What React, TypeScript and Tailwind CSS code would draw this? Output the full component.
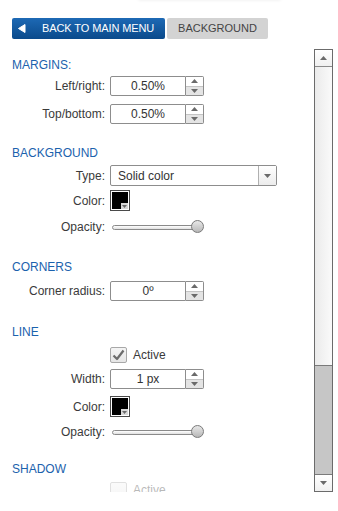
import React from "react";

const font = { fontFamily: '"Liberation Sans", Arial, sans-serif' };

function Heading({ children, mt }: { children: React.ReactNode; mt: string }) {
  return (
    <div className={`${mt} h-[14px] text-[12px] leading-[14px] text-[#1b62ad]`}>{children}</div>
  );
}

function Row({ label, mt, h, children }: { label: string; mt: string; h: string; children: React.ReactNode }) {
  return (
    <div className={`${mt} ${h} flex items-center`}>
      <div className="w-[94px] pr-[1px] text-right text-[12px] leading-[14px] text-[#3a3a3a]">{label}</div>
      <div className="ml-[4px] flex items-center">{children}</div>
    </div>
  );
}

function Spinner({ value }: { value: string }) {
  return (
    <div className="flex h-[20px]">
      <div className="flex h-[20px] w-[76px] items-center justify-center rounded-l-[2px] border border-[#8d8d8d] bg-white text-[12px] text-[#333]">
        {value}
      </div>
      <div className="flex h-[20px] w-[18px] flex-col rounded-r-[2px] border border-l-0 border-[#8d8d8d]">
        <div className="flex flex-1 items-center justify-center border-b border-[#c4c4c4] bg-white">
          <svg width="7" height="4" viewBox="0 0 7 4"><path d="M0 4 L3.5 0 L7 4 Z" fill="#6a6a6a" /></svg>
        </div>
        <div className="flex flex-1 items-center justify-center bg-[#e4e4e4]">
          <svg width="7" height="4" viewBox="0 0 7 4"><path d="M0 0 L7 0 L3.5 4 Z" fill="#6a6a6a" /></svg>
        </div>
      </div>
    </div>
  );
}

function Swatch() {
  return (
    <div className="relative h-[21px] w-[20px] border border-[#4a4a4a] bg-white p-[1px]">
      <div className="h-full w-full bg-black" />
      <div className="absolute bottom-[1px] right-[1px] flex h-[6px] w-[7px] items-center justify-center bg-[#d8d8d8]">
        <svg width="5" height="3" viewBox="0 0 5 3"><path d="M0 0 L5 0 L2.5 3 Z" fill="#6a6a6a" /></svg>
      </div>
    </div>
  );
}

function Slider() {
  return (
    <div className="relative flex h-[14px] w-[94px] items-center">
      <div className="ml-[2px] h-[5px] w-[84px] rounded-l-[3px] border border-[#8a8a8a] bg-gradient-to-b from-[#ffffff] to-[#e0e0e0]" />
      <div className="absolute left-[81px] top-[0px] h-[13px] w-[13px] rounded-full border border-[#7a7a7a] bg-gradient-to-b from-[#e8e8e8] to-[#b8b8b8]" />
    </div>
  );
}

function Checkbox({ checked }: { checked: boolean }) {
  return (
    <div className="flex h-[16px] w-[17px] items-center justify-center rounded-[2px] border border-[#a8a8a8] bg-gradient-to-b from-[#f4f4f4] to-[#e6e6e6]">
      {checked && (
        <svg width="13" height="12" viewBox="0 0 13 12">
          <path d="M1.5 6.5 L5 10 L11.5 1.5" fill="none" stroke="#6c6c6c" strokeWidth="2.2" strokeLinejoin="round" />
        </svg>
      )}
    </div>
  );
}

export default function App() {
  return (
    <div className="relative h-[511px] w-[338px] overflow-hidden bg-white" style={font}>
      <div className="absolute left-[137px] top-[-8px] h-[8px] w-[145px] rounded-[4px] shadow-[0_1px_3px_rgba(0,0,0,0.05)]" />
      <div className="flex gap-[2px] pl-[12px] pt-[18px]">
        <div className="flex h-[21px] w-[153px] items-center rounded-[2px] bg-gradient-to-b from-[#1d69b5] to-[#0a4a8b] text-[11px] text-white">
          <svg className="ml-[6px]" width="8" height="9" viewBox="0 0 8 9"><path d="M7 0.5 L7 8.5 L0.5 4.5 Z" fill="white" stroke="white" strokeLinejoin="round" /></svg>
          <span className="ml-[16px] tracking-[-0.1px]">BACK TO MAIN MENU</span>
        </div>
        <div className="flex h-[21px] w-[101px] items-center justify-center rounded-[2px] bg-[#d3d3d3] text-[11px] text-[#444]">
          BACKGROUND
        </div>
      </div>
      <div className="mt-[10px] flex">
        <div className="h-[443px] flex-1 overflow-hidden pl-[12px]">
          <Heading mt="mt-[9px]">MARGINS:</Heading>
          <Row label="Left/right:" mt="mt-[4px]" h="h-[20px]"><Spinner value="0.50%" /></Row>
          <Row label="Top/bottom:" mt="mt-[8px]" h="h-[20px]"><Spinner value="0.50%" /></Row>

          <Heading mt="mt-[22px]">BACKGROUND</Heading>
          <Row label="Type:" mt="mt-[5px]" h="h-[21px]">
            <div className="flex h-[21px] w-[167px] rounded-[2px] border border-[#8d8d8d] bg-white">
              <div className="flex flex-1 items-center pl-[7px] text-[12px] text-[#333]">Solid color</div>
              <div className="flex w-[18px] items-center justify-center border-l border-[#b0b0b0] bg-gradient-to-b from-[#ffffff] to-[#ececec]">
                <svg width="7" height="4" viewBox="0 0 7 4"><path d="M0 0 L7 0 L3.5 4 Z" fill="#6a6a6a" /></svg>
              </div>
            </div>
          </Row>
          <Row label="Color:" mt="mt-[4px]" h="h-[21px]"><Swatch /></Row>
          <Row label="Opacity:" mt="mt-[9px]" h="h-[14px]"><Slider /></Row>

          <Heading mt="mt-[26px]">CORNERS</Heading>
          <Row label="Corner radius:" mt="mt-[7px]" h="h-[20px]"><Spinner value="0º" /></Row>

          <Heading mt="mt-[24px]">LINE</Heading>
          <div className="mt-[8px] flex h-[16px] items-center pl-[98px]">
            <Checkbox checked />
            <span className="ml-[6px] text-[12px] text-[#3a3a3a]">Active</span>
          </div>
          <Row label="Width:" mt="mt-[6px]" h="h-[20px]"><Spinner value="1 px" /></Row>
          <Row label="Color:" mt="mt-[7px]" h="h-[21px]"><Swatch /></Row>
          <Row label="Opacity:" mt="mt-[8px]" h="h-[14px]"><Slider /></Row>

          <Heading mt="mt-[23px]">SHADOW</Heading>
          <div className="mt-[6px] flex h-[16px] items-center pl-[98px] opacity-35">
            <Checkbox checked={false} />
            <span className="ml-[6px] text-[12px] text-[#3a3a3a]">Active</span>
          </div>
        </div>
        <div className="mr-[5px] flex h-[443px] w-[19px] flex-col border border-[#6b6b6b]">
          <div className="flex h-[17px] items-center justify-center border-b border-[#8a8a8a] bg-gradient-to-b from-[#ffffff] to-[#f0f0f0]">
            <svg width="7" height="4" viewBox="0 0 7 4"><path d="M0 4 L3.5 0 L7 4 Z" fill="#6a6a6a" /></svg>
          </div>
          <div className="h-[298px] bg-gradient-to-r from-[#ebebeb] to-[#fafafa]" />
          <div className="flex-1 border-y border-[#7a7a7a] bg-[#c6c6c6]" />
          <div className="flex h-[16px] items-center justify-center bg-gradient-to-b from-[#ffffff] to-[#f0f0f0]">
            <svg width="7" height="4" viewBox="0 0 7 4"><path d="M0 0 L7 0 L3.5 4 Z" fill="#6a6a6a" /></svg>
          </div>
        </div>
      </div>
    </div>
  );
}
